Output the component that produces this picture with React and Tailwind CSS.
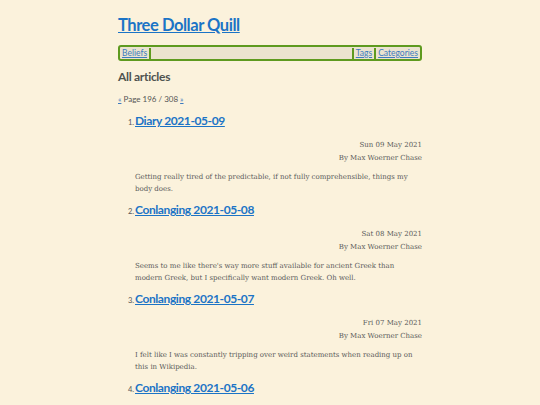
import React from "react";

const items = [
  { t: "Diary 2021-05-09", d: "Sun 09 May 2021", b: ["Getting really tired of the predictable, if not fully comprehensible, things my", "body does."] },
  { t: "Conlanging 2021-05-08", d: "Sat 08 May 2021", b: ["Seems to me like there's way more stuff available for ancient Greek than", "modern Greek, but I specifically want modern Greek. Oh well."] },
  { t: "Conlanging 2021-05-07", d: "Fri 07 May 2021", b: ["I felt like I was constantly tripping over weird statements when reading up on", "this in Wikipedia."] },
  { t: "Conlanging 2021-05-06", d: "Thu 06 May 2021", b: ["More stuff.", ""] },
];

const sans = { fontFamily: 'Lato, "Open Sans", sans-serif' };
const serif = { fontFamily: '"DejaVu Serif", "Liberation Serif", serif' };

export default function App() {
  return (
    <div className="h-[405px] w-[540px] overflow-hidden bg-[#fbf2dc] text-[#555]">
      <div className="mx-auto w-[304px] pt-[14px]">
        <h1 style={sans} className="text-[16.5px] font-bold leading-[22px] tracking-[-0.45px] text-[#1b74c6] underline">Three Dollar Quill</h1>
        <nav style={sans} className="mt-[9px] flex h-[16px] items-center rounded-[3px] border-2 border-[#5e9a1f] bg-[#ebe3cf] px-[2px] text-[8.5px]">
          <a className="text-[#3d7bbf] underline">Beliefs</a>
          <span className="mx-[2px] h-[11px] w-[2px] bg-[#5e9a1f]" />
          <span className="flex-1" />
          <span className="mx-[2px] h-[11px] w-[2px] bg-[#5e9a1f]" />
          <a className="text-[#3d7bbf] underline">Tags</a>
          <span className="mx-[2px] h-[11px] w-[2px] bg-[#5e9a1f]" />
          <a className="text-[#3d7bbf] underline">Categories</a>
        </nav>
        <h2 style={sans} className="mt-[7px] text-[12px] font-bold leading-[18px] tracking-[-0.3px] text-[#4f5350]">All articles</h2>
        <div style={sans} className="mt-[8px] text-[8px] leading-[10px] text-[#555]">
          <span className="text-[#3d7bbf] underline">«</span> Page 196 / 308 <span className="text-[#3d7bbf] underline">»</span>
        </div>
        <ol className="mt-[8px]">
          {items.map((it, i) => (
            <li key={i} className="h-[89px]">
              <div className="flex items-baseline pl-[10px]">
                <span style={sans} className="w-[7px] text-[7.5px] text-[#555]">{i + 1}.</span>
                <a style={sans} className="text-[12px] font-bold leading-[18px] tracking-[-0.4px] text-[#1b74c6] underline">{it.t}</a>
              </div>
              <div style={serif} className="mt-[9px] pl-[17px] text-right text-[7px] leading-[13px] text-[#5a5a5a]">
                <div>{it.d}</div>
                <div>By Max Woerner Chase</div>
              </div>
              <div style={serif} className="mt-[6px] whitespace-nowrap pl-[17px] text-[7px] leading-[12px] text-[#5a5a5a]">
                <div>{it.b[0]}</div>
                <div>{it.b[1]}</div>
              </div>
            </li>
          ))}
        </ol>
      </div>
    </div>
  );
}
